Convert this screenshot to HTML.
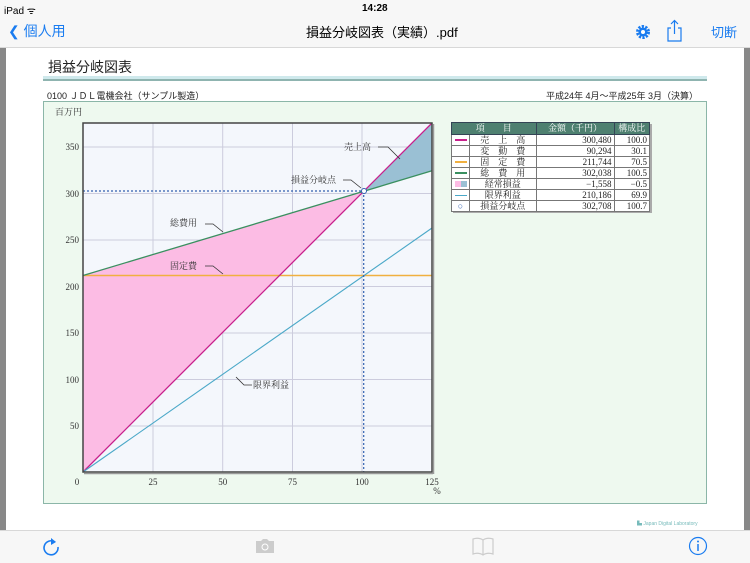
<!DOCTYPE html>
<html><head><meta charset="utf-8"><style>
*{margin:0;padding:0;box-sizing:border-box}
body{width:750px;height:563px;overflow:hidden;background:#f7f7f7;font-family:"Liberation Sans","Noto Sans CJK JP",sans-serif;position:relative}
.a{position:absolute}
.serif{font-family:"Liberation Serif","Noto Serif CJK SC",serif}
td{padding:0 2px}
</style></head><body>
<div class="a" style="left:0;top:0;width:750px;height:48px;background:#f7f7f7;border-bottom:1px solid #d8d8d8"></div>
<div class="a" style="left:4px;top:3px;font-size:10px;color:#000">iPad ᯤ</div>
<div class="a" style="left:362px;top:3px;font-size:10px;color:#000;font-weight:bold">14:28</div>
<div class="a" style="left:8px;top:21px;font-size:14px;color:#1a7cf0">❮ 個人用</div>
<div class="a" style="left:306px;top:22px;font-size:13px;color:#000">損益分岐図表（実績）.pdf</div>
<svg class="a" style="left:635px;top:24px" width="16" height="16"><circle cx="8" cy="8" r="5.5" fill="none" stroke="#1a7cf0" stroke-width="3" stroke-dasharray="2.2,1.3"/><circle cx="8" cy="8" r="4.5" fill="#1a7cf0"/><circle cx="8" cy="8" r="2" fill="#fff"/></svg>
<svg class="a" style="left:666px;top:19px" width="18" height="24"><path d="M5 9H2v13h13V9h-3M8.5 15V2M5 5l3.5-3.5L12 5" fill="none" stroke="#1a7cf0" stroke-width="1.2"/></svg>
<div class="a" style="left:711px;top:22px;font-size:13px;color:#1a7cf0">切断</div>
<!-- page -->
<div class="a" style="left:0;top:48px;width:6px;height:482px;background:#888"></div>
<div class="a" style="left:744px;top:48px;width:6px;height:482px;background:#888"></div>
<div class="a" style="left:6px;top:48px;width:738px;height:482px;background:#fff"></div>
<div class="a" style="left:48px;top:57px;font-size:14px;color:#222">損益分岐図表</div>
<div class="a" style="left:43px;top:76px;width:664px;height:3px;background:#cfe9ec"></div>
<div class="a" style="left:43px;top:79px;width:664px;height:2px;background:#8fb4b0"></div>
<div class="a" style="left:43px;top:101px;width:664px;height:403px;background:#eef9ef;border:1px solid #8bb6a8"></div>
<div class="a" style="left:47px;top:91px;font-size:9px;line-height:10px;color:#222">0100 ＪＤＬ電機会社（サンプル製造）</div>
<div class="a" style="left:546px;top:91px;font-size:9px;line-height:10px;color:#222">平成24年 4月～平成25年 3月（決算）</div>
<svg class="a serif" style="left:0;top:0" width="750" height="563" font-size="9" fill="#333">
<text x="55" y="115">百万円</text>
<rect x="83" y="123" width="349" height="349" fill="#f4f7fc"/>
<g stroke="#ccd" stroke-width="1">
<line x1="153" y1="123" x2="153" y2="472"/><line x1="222.7" y1="123" x2="222.7" y2="472"/><line x1="292.5" y1="123" x2="292.5" y2="472"/><line x1="362" y1="123" x2="362" y2="472"/>
<line x1="83" y1="426" x2="432" y2="426"/><line x1="83" y1="379.5" x2="432" y2="379.5"/><line x1="83" y1="333" x2="432" y2="333"/><line x1="83" y1="286.5" x2="432" y2="286.5"/><line x1="83" y1="240" x2="432" y2="240"/><line x1="83" y1="193.5" x2="432" y2="193.5"/><line x1="83" y1="147" x2="432" y2="147"/>
</g>
<polygon points="83,275.5 363.7,191 83,472" fill="#fcbce4"/>
<polygon points="363.7,191 432,123 432,170.8" fill="#9ac0d4"/>
<line x1="83" y1="275.5" x2="432" y2="275.5" stroke="#f0b040" stroke-width="1.5"/>
<line x1="83" y1="275.5" x2="432" y2="170.8" stroke="#3a9060" stroke-width="1.3"/>
<line x1="83" y1="472" x2="432" y2="123" stroke="#c8208c" stroke-width="1.3"/>
<line x1="83" y1="472" x2="432" y2="228" stroke="#4aa8c8" stroke-width="1.1"/>
<g stroke="#3060b0" stroke-dasharray="2,2" stroke-width="1.2"><line x1="83" y1="191" x2="363.7" y2="191"/><line x1="363.7" y1="191" x2="363.7" y2="472"/></g>
<circle cx="364" cy="191" r="2.5" fill="#fff" stroke="#3060b0"/>
<rect x="83" y="123" width="349" height="349" fill="none" stroke="#444" stroke-width="1.5"/>
<line x1="84" y1="473.5" x2="433" y2="473.5" stroke="#999" stroke-width="1.5"/><line x1="433.5" y1="124" x2="433.5" y2="474" stroke="#999" stroke-width="1.5"/>
<g text-anchor="end"><text x="79" y="429">50</text><text x="79" y="383">100</text><text x="79" y="336">150</text><text x="79" y="290">200</text><text x="79" y="243">250</text><text x="79" y="197">300</text><text x="79" y="150">350</text></g>
<g text-anchor="middle"><text x="77" y="485">0</text><text x="153" y="485">25</text><text x="222.7" y="485">50</text><text x="292.5" y="485">75</text><text x="362" y="485">100</text><text x="432" y="485">125</text><text x="437" y="494">%</text></g>
<g fill="none" stroke="#333" stroke-width="0.8">
<path d="M378 147h10l12 12"/><path d="M343 180h8l10 8"/><path d="M205 224h8l10 8"/><path d="M205 266h8l10 8"/><path d="M252 385h-8l-8 -8"/></g>
<text x="344" y="150">売上高</text><text x="291" y="183">損益分岐点</text><text x="170" y="226">総費用</text><text x="170" y="269">固定費</text><text x="253" y="388">限界利益</text>
</svg>
<!-- table -->
<div class="a" style="left:453px;top:124px;width:199px;height:89px;background:#aaa"></div>
<table class="a serif" style="left:451px;top:122px;width:199px;border-collapse:collapse;font-size:9px;color:#222;background:#fff">
<tr style="background:#4e8070;color:#fff;height:12px;line-height:11px"><td colspan="2" style="border:1px solid #345;text-align:center;width:78px">項　　目</td><td style="border:1px solid #345;text-align:center;width:78px">金額（千円）</td><td style="border:1px solid #345;text-align:center">構成比</td></tr>
<tbody style="line-height:10px">
<tr><td style="width:18px;border:1px solid #777"><div style="height:2px;width:12px;margin:auto;background:#c8208c"></div></td><td style="border:1px solid #777;text-align:center">売　上　高</td><td style="border:1px solid #777;text-align:right">300,480</td><td style="border:1px solid #777;text-align:right">100.0</td></tr>
<tr><td style="border:1px solid #777"></td><td style="border:1px solid #777;text-align:center">変　動　費</td><td style="border:1px solid #777;text-align:right">90,294</td><td style="border:1px solid #777;text-align:right">30.1</td></tr>
<tr><td style="border:1px solid #777"><div style="height:2px;width:12px;margin:auto;background:#f0b040"></div></td><td style="border:1px solid #777;text-align:center">固　定　費</td><td style="border:1px solid #777;text-align:right">211,744</td><td style="border:1px solid #777;text-align:right">70.5</td></tr>
<tr><td style="border:1px solid #777"><div style="height:2px;width:12px;margin:auto;background:#3a9060"></div></td><td style="border:1px solid #777;text-align:center">総　費　用</td><td style="border:1px solid #777;text-align:right">302,038</td><td style="border:1px solid #777;text-align:right">100.5</td></tr>
<tr><td style="border:1px solid #777"><div style="height:6px;width:12px;margin:auto;background:linear-gradient(90deg,#fcbce4 50%,#9ac0d4 50%)"></div></td><td style="border:1px solid #777;text-align:center">経常損益</td><td style="border:1px solid #777;text-align:right">−1,558</td><td style="border:1px solid #777;text-align:right">−0.5</td></tr>
<tr><td style="border:1px solid #777"><div style="height:1px;width:12px;margin:auto;background:#4aa8c8"></div></td><td style="border:1px solid #777;text-align:center">限界利益</td><td style="border:1px solid #777;text-align:right">210,186</td><td style="border:1px solid #777;text-align:right">69.9</td></tr>
<tr><td style="border:1px solid #777;text-align:center;color:#3060b0">○</td><td style="border:1px solid #777;text-align:center">損益分岐点</td><td style="border:1px solid #777;text-align:right">302,708</td><td style="border:1px solid #777;text-align:right">100.7</td></tr>
</tbody></table>
<div class="a" style="left:637px;top:520px;font-size:5px;color:#7bb">▙ Japan Digital Laboratory</div>
<!-- bottom bar -->
<div class="a" style="left:0;top:530px;width:750px;height:33px;background:#f7f7f7;border-top:1px solid #d8d8d8"></div>
<svg class="a" style="left:42px;top:537px" width="20" height="20"><path d="M13 5A7 7 0 1 0 16 10" fill="none" stroke="#1a7cf0" stroke-width="1.6"/><path d="M9 1l5 4-5 3z" fill="#1a7cf0"/></svg>
<svg class="a" style="left:255px;top:538px" width="20" height="16"><path d="M1 3h5l2-2h4l2 2h5v12H1z" fill="#ccc"/><circle cx="10" cy="9" r="3" fill="none" stroke="#fff"/></svg>
<svg class="a" style="left:472px;top:536px" width="22" height="20"><path d="M11 4C8 2 4 2 1 3v15c3-1 7-1 10 1 3-2 7-2 10-1V3c-3-1-7-1-10 1zM11 4v15" fill="none" stroke="#ccc" stroke-width="1.2"/></svg>
<svg class="a" style="left:688px;top:536px" width="20" height="20"><circle cx="10" cy="10" r="8.5" fill="none" stroke="#1a7cf0" stroke-width="1.2"/><circle cx="10" cy="5.5" r="1" fill="#1a7cf0"/><path d="M10 8v7" stroke="#1a7cf0" stroke-width="1.5"/></svg>
</body></html>
